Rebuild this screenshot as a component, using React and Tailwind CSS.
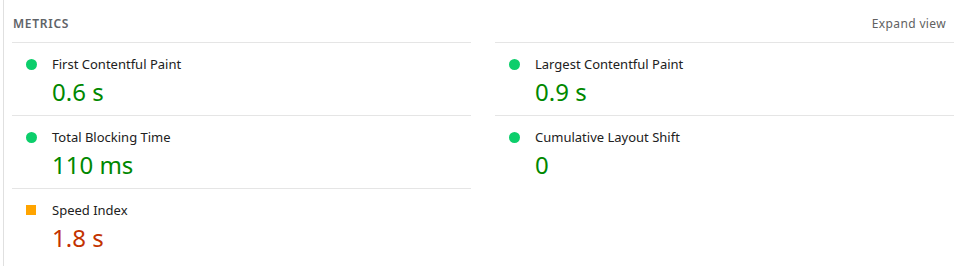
import React from "react";

const metrics = [
  { label: "First Contentful Paint", value: "0.6 s", kind: "pass" },
  { label: "Largest Contentful Paint", value: "0.9 s", kind: "pass" },
  { label: "Total Blocking Time", value: "110 ms", kind: "pass" },
  { label: "Cumulative Layout Shift", value: "0", kind: "pass" },
  { label: "Speed Index", value: "1.8 s", kind: "average" },
];

function Metric({ m }) {
  const pass = m.kind === "pass";
  return (
    <div className="border-t border-[#e5e5e5] h-[73px] pt-[12px] flex">
      <div className="w-[40px] pl-[14px] pt-[4px] shrink-0">
        {pass ? (
          <div className="w-[11px] h-[11px] rounded-full bg-[#0cce6b]" />
        ) : (
          <div className="w-[10px] h-[10px] bg-[#ffa400]" />
        )}
      </div>
      <div className="flex flex-col">
        <div className="text-[13px] leading-[18px] text-[#212121]">{m.label}</div>
        <div
          className={
            "text-[24px] leading-[32px] mt-[3px] " +
            (pass ? "text-[#008800]" : "text-[#c33300]")
          }
        >
          {m.value}
        </div>
      </div>
    </div>
  );
}

export default function App() {
  return (
    <div
      className="w-[960px] h-[266px] bg-white overflow-hidden"
      style={{ fontFamily: '"Noto Sans", "Open Sans", Arial, sans-serif' }}
    >
      <div className="ml-[3px] border-l border-[#e0e0e0] h-full pl-[8px] pr-[6px]">
        <div className="h-[42px] flex items-center justify-between pt-[6px]">
          <div className="text-[12px] font-semibold tracking-[0.06em] text-[#5f6368] pl-[1px]">
            METRICS
          </div>
          <div className="text-[12px] text-[#616161] tracking-[0.03em] pr-[8px]">
            Expand view
          </div>
        </div>
        <div className="grid grid-cols-2 gap-x-[24px]">
          {metrics.map((m) => (
            <Metric key={m.label} m={m} />
          ))}
        </div>
      </div>
    </div>
  );
}
